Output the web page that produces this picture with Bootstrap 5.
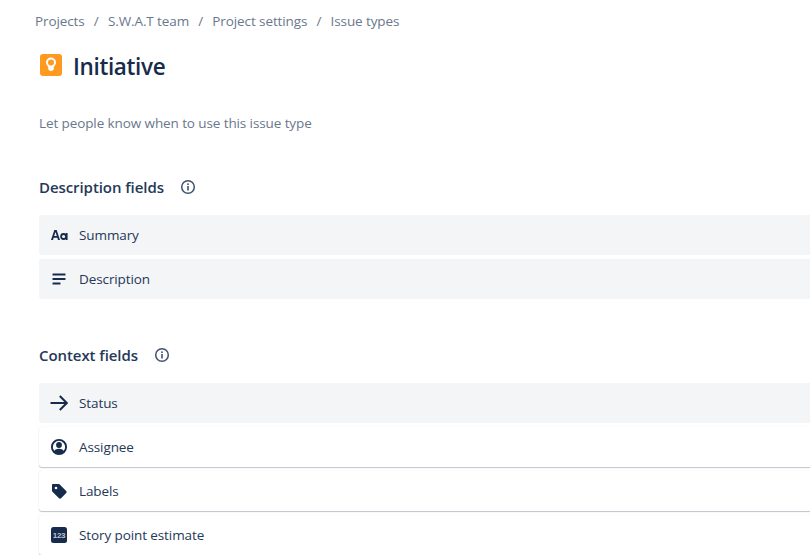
<!DOCTYPE html>
<html lang="en">
<head>
  <meta charset="UTF-8" />
  <meta name="viewport" content="width=device-width, initial-scale=1.0"/>
  <title>Issue types | Initiative</title>
  <link href="https://cdn.jsdelivr.net/npm/bootstrap@5.3.0/dist/css/bootstrap.min.css" rel="stylesheet">
  <style>
    html, body {
      height: 555px;
      overflow: hidden;
    }
    body {
      font-family: "Open Sans", "Noto Sans", sans-serif;
      color: #172b4d;
      background: #fff;
    }
    .page-wrap {
      padding-left: 39px;
    }
    .crumbs {
      height: 42px;
      font-size: 13.5px;
      color: #6b778c;
      letter-spacing: -0.1px;
    }
    .crumbs .crumb-sep {
      margin: 0 9.2px;
    }
    .crumbs-in {
      margin-left: -4px;
    }
    .title-row {
      height: 49px;
    }
    .title-row h1 {
      font-size: 22.5px;
      font-weight: 600;
      margin: 0 0 0 10px;
      color: #172b4d;
      letter-spacing: -0.35px;
    }
    .type-help {
      margin: 22px 0 0;
      height: 46px;
      font-size: 13.5px;
      color: #6b778c;
      letter-spacing: -0.1px;
    }
    .group-title {
      height: 56px;
      margin: 0;
    }
    .group-title span {
      font-size: 15px;
      font-weight: 600;
      color: #253858;
      letter-spacing: -0.07px;
    }
    .group-title svg {
      margin-left: 16px;
    }
    .field-list {
      margin-right: -20px;
      gap: 4px;
    }
    .field-row {
      height: 40px;
      padding-left: 11px;
      border-radius: 3px;
      font-size: 13.5px;
      color: #253858;
      letter-spacing: -0.1px;
    }
    .field-row.locked {
      background: #f4f5f7;
    }
    .field-row.open {
      background: #fff;
      box-shadow: 0 1px 1px rgba(9, 30, 66, 0.25), 0 0 1px rgba(9, 30, 66, 0.13);
    }
    .field-ico {
      width: 18px;
      height: 18px;
      margin-right: 11px;
      flex: none;
    }
    .group-gap {
      height: 28px;
    }
  </style>
</head>
<body>

<div class="page-wrap">
  <nav class="crumbs d-flex align-items-center">
    <div class="crumbs-in">
      <span>Projects</span><span class="crumb-sep">/</span><span>S.W.A.T team</span><span class="crumb-sep">/</span><span>Project settings</span><span class="crumb-sep">/</span><span>Issue types</span>
    </div>
  </nav>

  <div class="title-row d-flex align-items-center">
    <svg width="24" height="24" viewBox="0 0 24 24" class="mb-1">
      <rect x="1" y="1" width="22" height="22" rx="3" fill="#ff991f"/>
      <path d="M12 4.500a5 5 0 0 1 5 5c0 2-1.700 3.300-2.300 5v1.800c0 .7-1.200 1.700-2.700 1.700s-2.700-1-2.700-1.700v-1.800C8.700 12.800 7 11.500 7 9.500a5 5 0 0 1 5-5z" fill="#fff"/>
      <circle cx="12" cy="9.600" r="3" fill="#ff991f"/>
    </svg>
    <h1>Initiative</h1>
  </div>

  <p class="type-help">Let people know when to use this issue type</p>

  <div class="group-title d-flex align-items-center">
    <span>Description fields</span>
    <svg width="16" height="16" viewBox="0 0 16 16">
      <circle cx="8" cy="8" r="6.300" fill="none" stroke="#42526e" stroke-width="1.500"/>
      <rect x="7.200" y="7" width="1.600" height="4.500" fill="#42526e"/>
      <rect x="7.200" y="4.400" width="1.600" height="1.600" fill="#42526e"/>
    </svg>
  </div>
  <div class="field-list d-flex flex-column">
    <div class="field-row locked d-flex align-items-center">
      <svg class="field-ico" viewBox="0 0 18 18">
        <path d="M1 14 4.300 4h2.400L10 14H8l-.7-2.200H3.700L3 14zM4.200 10.100h2.600L5.500 5.900z" fill="#172b4d"/>
        <circle cx="13.600" cy="10.500" r="2.500" fill="none" stroke="#172b4d" stroke-width="1.800"/>
        <path d="M16.700 7v7" stroke="#172b4d" stroke-width="1.800" fill="none"/>
      </svg>
      <span>Summary</span>
    </div>
    <div class="field-row locked d-flex align-items-center">
      <svg class="field-ico" viewBox="0 0 18 18">
        <rect x="2.500" y="3.500" width="13" height="2" rx=".5" fill="#172b4d"/>
        <rect x="2.500" y="8" width="13" height="2" rx=".5" fill="#172b4d"/>
        <rect x="2.500" y="12.500" width="8" height="2" rx=".5" fill="#172b4d"/>
      </svg>
      <span>Description</span>
    </div>
  </div>

  <div class="group-gap"></div>

  <div class="group-title d-flex align-items-center">
    <span>Context fields</span>
    <svg width="16" height="16" viewBox="0 0 16 16">
      <circle cx="8" cy="8" r="6.300" fill="none" stroke="#42526e" stroke-width="1.500"/>
      <rect x="7.200" y="7" width="1.600" height="4.500" fill="#42526e"/>
      <rect x="7.200" y="4.400" width="1.600" height="1.600" fill="#42526e"/>
    </svg>
  </div>
  <div class="field-list d-flex flex-column">
    <div class="field-row locked d-flex align-items-center">
      <svg class="field-ico" viewBox="0 0 18 18">
        <path d="M.5 9h15.500M9.800 2 16.800 9 9.800 16" fill="none" stroke="#172b4d" stroke-width="2"/>
      </svg>
      <span>Status</span>
    </div>
    <div class="field-row open d-flex align-items-center">
      <svg class="field-ico" viewBox="0 0 18 18">
        <circle cx="9" cy="9" r="7.100" fill="none" stroke="#172b4d" stroke-width="1.900"/>
        <circle cx="9" cy="7" r="2.900" fill="#172b4d"/>
        <path d="M3.800 14c.6-2.400 2.600-3.200 5.200-3.200s4.600.8 5.200 3.200C13 15.500 11 16 9 16s-4-.5-5.200-2z" fill="#172b4d"/>
      </svg>
      <span>Assignee</span>
    </div>
    <div class="field-row open d-flex align-items-center">
      <svg class="field-ico" viewBox="0 0 18 18">
        <path d="M3 2h6.200l7 7c.6.600.6 1.500 0 2.100l-5.100 5.100c-.6.600-1.500.6-2.100 0l-7-7V3c0-.6.400-1 1-1z" fill="#172b4d"/>
        <circle cx="6" cy="6" r="1.300" fill="#fff"/>
      </svg>
      <span>Labels</span>
    </div>
    <div class="field-row open d-flex align-items-center">
      <svg class="field-ico" viewBox="0 0 18 18">
        <rect x="1" y="1" width="16" height="16" rx="2.500" fill="#172b4d"/>
        <text x="9" y="11.700" text-anchor="middle" font-family="Liberation Sans, sans-serif" font-size="8" font-weight="700" letter-spacing="-.3" fill="#c1c7d0">123</text>
      </svg>
      <span>Story point estimate</span>
    </div>
  </div>
</div>

<script src="https://cdn.jsdelivr.net/npm/bootstrap@5.3.0/dist/js/bootstrap.bundle.min.js"></script>
</body>
</html>
